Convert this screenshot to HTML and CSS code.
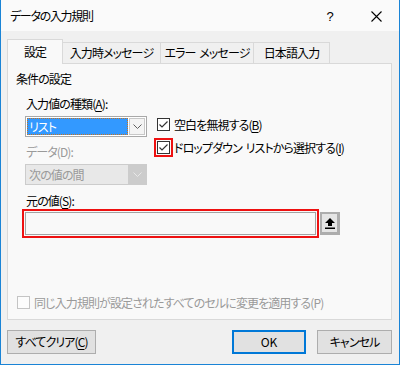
FILE: index.html
```html
<!DOCTYPE html>
<html lang="ja">
<head>
<meta charset="utf-8">
<link rel="stylesheet" href="styles.css">
</head>
<body>
<div class="window">
  <div class="titlebar">
    <span class="title">データの入力規則</span>
    <span class="tb-btn help">?</span>
    <span class="tb-btn close">
      <svg width="11" height="11" viewBox="0 0 11 11"><path d="M0.5 0.5 L10.5 10.5 M10.5 0.5 L0.5 10.5" stroke="#000" stroke-width="1.1" fill="none"/></svg>
    </span>
  </div>
  <div class="content">
    <div class="tabs">
      <div class="tab active w1">設定</div>
      <div class="tab w2">入力時メッセージ</div>
      <div class="tab w3">エラー メッセージ</div>
      <div class="tab w4">日本語入力</div>
    </div>
    <div class="panel">
      <div class="group-title">条件の設定</div>
      <div class="cond">
        <div class="col-left">
          <div class="label">入力値の種類(<u>A</u>):</div>
          <div class="combo">
            <div class="sel"><span class="sel-text">リスト</span></div>
            <div class="arrow">
              <svg width="9" height="5" viewBox="0 0 9 5"><path d="M0.5 0.5 L4.5 4.5 L8.5 0.5" stroke="#606060" stroke-width="1" fill="none"/></svg>
            </div>
          </div>
          <div class="label label-gap disabled">データ(D):</div>
          <div class="combo disabled">
            <div class="sel">次の値の間</div>
            <div class="arrow">
              <svg width="9" height="5" viewBox="0 0 9 5"><path d="M0.5 0.5 L4.5 4.5 L8.5 0.5" stroke="#e8e8e8" stroke-width="1" fill="none"/></svg>
            </div>
          </div>
        </div>
        <div class="col-right">
          <div class="check-row">
            <span class="cb-wrap">
              <svg class="cb" width="13" height="13" viewBox="0 0 13 13"><rect x="0.5" y="0.5" width="12" height="12" fill="#fff" stroke="#333"/><path d="M2.5 6.5 L5 9 L10.5 3.5" stroke="#333" stroke-width="1.2" fill="none"/></svg>
            </span>
            <span>空白を無視する(<u>B</u>)</span>
          </div>
          <div class="check-row">
            <span class="cb-wrap marked">
              <svg class="cb" width="13" height="13" viewBox="0 0 13 13"><rect x="0.5" y="0.5" width="12" height="12" fill="#fff" stroke="#333"/><path d="M2.5 6.5 L5 9 L10.5 3.5" stroke="#333" stroke-width="1.2" fill="none"/></svg>
            </span>
            <span>ドロップダウン リストから選択する(<u>I</u>)</span>
          </div>
        </div>
      </div>
      <div class="label src-label">元の値(<u>S</u>):</div>
      <div class="source-row">
        <div class="marked-box"><div class="input"></div></div>
        <div class="collapse-btn">
          <svg width="10" height="11" viewBox="0 0 10 11"><path d="M5 0 L10 5 L7 5 L7 8 L3 8 L3 5 L0 5 Z" fill="#000"/><rect x="0" y="9.5" width="10" height="1.5" fill="#000"/></svg>
        </div>
      </div>
      <div class="check-row apply disabled">
        <svg class="cb" width="13" height="13" viewBox="0 0 13 13"><rect x="0.5" y="0.5" width="12" height="12" fill="#fcfcfc" stroke="#c4c4c4"/></svg>
        <span>同じ入力規則が設定されたすべてのセルに変更を適用する(P)</span>
      </div>
    </div>
    <div class="buttons">
      <div class="btn clear">すべてクリア(<u>C</u>)</div>
      <div class="spacer"></div>
      <div class="btn ok">OK</div>
      <div class="btn cancel">キャンセル</div>
    </div>
  </div>
</div>
</body>
</html>
```
FILE: styles.css
```css
* { box-sizing: border-box; }
html, body { margin: 0; padding: 0; }
body {
  width: 400px;
  height: 365px;
  overflow: hidden;
  font-family: "Noto Sans CJK JP", "Liberation Sans", sans-serif;
  font-size: 12px;
  font-feature-settings: "palt";
  letter-spacing: -0.9px;
  word-spacing: 2px;
  color: #000;
}
u { text-decoration: underline; text-underline-offset: 2px; }

.window {
  width: 400px;
  height: 365px;
  background: #f0f0f0;
  border: 1px solid #1a84d6;
  border-top: none;
  display: flex;
  flex-direction: column;
}

.titlebar {
  height: 31px;
  background: #fafafa;
  display: flex;
  align-items: center;
  flex: none;
}
.title {
  flex: 1;
  padding-left: 9px;
  font-size: 12px;
  line-height: 16px;
  letter-spacing: -1.3px;
}
.tb-btn {
  width: 46px;
  height: 31px;
  display: flex;
  align-items: center;
  justify-content: center;
  letter-spacing: 0;
}
.help { font-family: "Liberation Sans", sans-serif; font-size: 13px; padding-top: 1px; }
.close { padding-top: 1px; }

.content {
  flex: 1;
  display: flex;
  flex-direction: column;
  padding: 8px 7px 0 6px;
}

.tabs {
  display: flex;
  align-items: flex-end;
  height: 25px;
  margin-bottom: -1px;
  position: relative;
  z-index: 1;
  flex: none;
}
.tab {
  height: 21px;
  margin-bottom: 1px;
  border: 1px solid #d9d9d9;
  border-bottom: none;
  background: #f0f0f0;
  text-align: center;
  line-height: 20px;
  margin-left: -1px;
}
.tab.active {
  height: 25px;
  margin-bottom: 0;
  background: #f9f9f9;
  line-height: 24px;
  margin-left: 0;
}
.w1 { width: 56px; }
.w2 { width: 99px; }
.w3 { width: 94px; }
.w4 { width: 77px; }

.panel {
  height: 257px;
  flex: none;
  border: 1px solid #d9d9d9;
  background: #f9f9f9;
  padding: 0 8px 7px 8px;
  display: flex;
  flex-direction: column;
}

.group-title {
  margin-top: 7px;
  line-height: 16px;
}

.cond {
  margin-top: 9px;
  margin-left: 9px;
  display: flex;
  gap: 7px;
}
.col-left { width: 122px; display: flex; flex-direction: column; }
.label { line-height: 16px; padding-left: 1px; }
.label-gap { margin-top: 7px; }
.disabled { color: #9a9a9a; }

.combo {
  margin-top: 4px;
  height: 21px;
  display: flex;
  border: 1px solid #a9a9a9;
  background: #fff;
  padding: 1px;
}
.combo .sel {
  flex: 1;
  background: #3399ff;
  color: #fff;
  border: 1px dotted #c8731e;
  line-height: 15px;
  padding-left: 1px;
}
.combo .arrow {
  width: 16px;
  margin-left: 1px;
  display: flex;
  align-items: center;
  justify-content: center;
  background: #f4f4f4;
  border: 1px solid #c8c8c8;
}
.combo.disabled {
  background: #e8e8e8;
  border-color: #cccccc;
  padding: 0;
}
.combo.disabled .sel {
  background: transparent;
  color: #9a9a9a;
  border: none;
  line-height: 19px;
  padding-left: 3px;
}
.combo.disabled .arrow {
  background: #cccccc;
  border: none;
  margin-left: 0;
  width: 18px;
}

.col-right {
  margin-top: 19px;
  display: flex;
  flex-direction: column;
  gap: 4px;
}
.check-row {
  display: flex;
  align-items: center;
  height: 19px;
  line-height: 19px;
  white-space: nowrap;
}
.cb-wrap {
  width: 19px;
  height: 19px;
  border: 2px solid transparent;
  padding: 1px;
  margin-right: 1px;
  display: flex;
}
.cb-wrap.marked { border-color: #ee1111; }
.cb { display: block; flex: none; }

.src-label { margin-top: 8px; margin-left: 9px; }

.source-row {
  margin-left: 6px;
  display: flex;
  align-items: center;
}
.marked-box {
  width: 297px;
  height: 29px;
  border: 2px solid #ee1111;
  padding: 1px;
}
.input {
  height: 23px;
  border: 1px solid #a3a3a3;
  background: #f9f9f9;
}
.collapse-btn {
  margin-left: 1px;
  width: 20px;
  height: 23px;
  border: solid #adadad;
  border-width: 2px 3px 3px 2px;
  background: #e5e5e5;
  display: flex;
  align-items: center;
  justify-content: center;
}

.apply {
  margin-top: auto;
  gap: 4px;
  padding-left: 1px;
}

.buttons {
  margin-top: 10px;
  display: flex;
  gap: 11px;
  height: 24px;
  flex: none;
}
.spacer { flex: 1; }
.btn {
  height: 24px;
  background: #e1e1e1;
  border: 1px solid #adadad;
  text-align: center;
  line-height: 22px;
}
.clear { width: 89px; }
.ok { width: 74px; border: 2px solid #0078d7; line-height: 20px; letter-spacing: 0; }
.cancel { width: 75px; }
```
